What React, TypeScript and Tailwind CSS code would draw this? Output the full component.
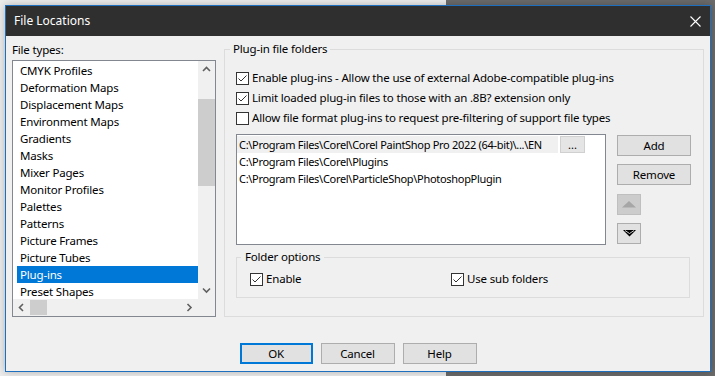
import React from "react";

const fileTypes = [
  "CMYK Profiles",
  "Deformation Maps",
  "Displacement Maps",
  "Environment Maps",
  "Gradients",
  "Masks",
  "Mixer Pages",
  "Monitor Profiles",
  "Palettes",
  "Patterns",
  "Picture Frames",
  "Picture Tubes",
  "Plug-ins",
  "Preset Shapes",
];

const folders = [
  "C:\\Program Files\\Corel\\Corel PaintShop Pro 2022 (64-bit)\\...\\EN",
  "C:\\Program Files\\Corel\\Plugins",
  "C:\\Program Files\\Corel\\ParticleShop\\PhotoshopPlugin",
];

function Check({ checked, label }: { checked: boolean; label: string }) {
  return (
    <div className="flex items-center h-[20px]">
      <span className="w-[13px] h-[13px] flex-none border border-[#333333] bg-white flex items-center justify-center">
        {checked && (
          <svg width="11" height="11" viewBox="0 0 11 11">
            <polyline points="1.5,5.5 4,8 9.5,2.5" fill="none" stroke="#333333" strokeWidth="1" />
          </svg>
        )}
      </span>
      <span className="ml-[3px] text-[#000]">{label}</span>
    </div>
  );
}

function Chevron({ dir }: { dir: "up" | "down" | "left" | "right" }) {
  const pts = {
    up: "1,5 4.5,1.5 8,5",
    down: "1,1.5 4.5,5 8,1.5",
    left: "5,1 1.5,4.5 5,8",
    right: "1.5,1 5,4.5 1.5,8",
  }[dir];
  const vert = dir === "up" || dir === "down";
  return (
    <svg width={vert ? 9 : 7} height={vert ? 7 : 9} viewBox={vert ? "0 0 9 7" : "0 0 7 9"}>
      <polyline points={pts} fill="none" stroke="#606060" strokeWidth="1.6" />
    </svg>
  );
}

function Btn({ children, primary }: { children: React.ReactNode; primary?: boolean }) {
  return (
    <button
      className={
        primary
          ? "w-[73px] h-[21px] bg-[#e1e1e1] border-2 border-[#0078d7] text-black leading-none"
          : "w-[74px] h-[21px] bg-[#e1e1e1] border border-[#adadad] text-black leading-none"
      }
    >
      {children}
    </button>
  );
}

export default function App() {
  return (
    <div
      className="relative w-[715px] h-[376px] overflow-hidden bg-[linear-gradient(to_right,#ececec_446px,#6b6b6b_446px)] text-[11.5px] tracking-[-0.18px] text-black"
      style={{ fontFamily: '"Noto Sans", "Open Sans", sans-serif' }}
    >
      {/* Dialog window */}
      <div className="absolute left-[5px] top-[5px] w-[706px] h-[367px] border border-[#1f6fbf] bg-[#f0f0f0] shadow-[0_0_8px_rgba(0,0,0,0.25)] flex flex-col">
        {/* Title bar */}
        <div className="h-[30px] flex-none bg-[#2f2f2f] flex items-center justify-between pl-[8px] pr-[9px]">
          <span className="text-white text-[12px] tracking-normal">File Locations</span>
          <svg width="11" height="11" viewBox="0 0 11 11">
            <path d="M0.5 0.5 L10.5 10.5 M10.5 0.5 L0.5 10.5" stroke="#ffffff" strokeWidth="1.1" />
          </svg>
        </div>

        {/* Body */}
        <div className="flex items-start pl-[6px]">
          {/* File types */}
          <div className="w-[204px] pt-[6px] flex-none">
            <div className="h-[16px] leading-[16px]">File types:</div>
            <div className="mt-[2px] h-[257px] border border-[#828790] bg-white grid grid-cols-[1fr_17px] grid-rows-[1fr_17px]">
              <div className="pl-[4px] pt-[1px] overflow-hidden">
                {fileTypes.map((t) => (
                  <div
                    key={t}
                    className={
                      t === "Plug-ins"
                        ? "h-[17px] leading-[17px] pl-[3px] bg-[#0078d7] text-white"
                        : "h-[17px] leading-[17px] pl-[3px]"
                    }
                  >
                    {t}
                  </div>
                ))}
              </div>
              <div className="bg-[#f0f0f0] flex flex-col items-center">
                <div className="h-[17px] flex items-center justify-center">
                  <Chevron dir="up" />
                </div>
                <div className="flex-1 w-full pt-[21px]">
                  <div className="h-[87px] w-full bg-[#cdcdcd]" />
                </div>
                <div className="h-[17px] flex items-center justify-center">
                  <Chevron dir="down" />
                </div>
              </div>
              <div className="bg-[#f0f0f0] flex items-center">
                <div className="w-[17px] h-full flex items-center justify-center">
                  <Chevron dir="left" />
                </div>
                <div className="w-[17px] h-[15px] bg-[#cdcdcd]" />
                <div className="flex-1" />
                <div className="w-[17px] h-full flex items-center justify-center">
                  <Chevron dir="right" />
                </div>
              </div>
              <div className="bg-[#f0f0f0]" />
            </div>
          </div>

          {/* Plug-in file folders */}
          <fieldset className="ml-[8px] mt-[5px] w-[480px] h-[276px] border border-[#dcdcdc]">
            <legend className="ml-[5px] px-[3px] h-[16px] leading-[16px]">Plug-in file folders</legend>
            <div className="pl-[11px]">
              <div className="mt-[11px]">
                <Check checked label="Enable plug-ins - Allow the use of external Adobe-compatible plug-ins" />
                <Check checked label="Limit loaded plug-in files to those with an .8B? extension only" />
                <Check checked={false} label="Allow file format plug-ins to request pre-filtering of support file types" />
              </div>

              <div className="mt-[6px] flex items-start">
                <div className="w-[370px] h-[111px] border border-[#828790] bg-white pt-[1px] text-[11px] tracking-[-0.3px]">
                  {folders.map((f, i) => (
                    <div key={f} className="h-[17px] flex items-center">
                      <div
                        className={
                          i === 0
                            ? "w-[321px] h-full leading-[17px] pl-[2px] bg-[#f0f0f0] whitespace-nowrap overflow-hidden"
                            : "h-full leading-[17px] pl-[2px] whitespace-nowrap"
                        }
                      >
                        {f}
                      </div>
                      {i === 0 && (
                        <div className="ml-[2px] w-[25px] h-full bg-[#e5e5e5] border border-[#d0d0d0] flex items-center justify-center leading-none tracking-normal">
                          ...
                        </div>
                      )}
                    </div>
                  ))}
                </div>
                <div className="ml-[11px] mt-[1px] flex flex-col">
                  <Btn>Add</Btn>
                  <div className="mt-[8px]">
                    <Btn>Remove</Btn>
                  </div>
                  <div className="mt-[9px] w-[24px] h-[21px] bg-[#cccccc] border border-[#bfbfbf] flex items-center justify-center">
                    <svg width="14" height="7" viewBox="0 0 14 7">
                      <polygon points="0,6.5 7,0 14,6.5" fill="#a6a6a6" />
                    </svg>
                  </div>
                  <div className="mt-[8px] w-[24px] h-[21px] bg-[#e1e1e1] border border-[#adadad] flex items-center justify-center">
                    <svg width="13" height="7" viewBox="0 0 13 7">
                      <polygon points="0,0 13,0 6.5,6.5" fill="#000000" />
                      <polyline points="2,0.5 6.5,3.5 11,0.5" fill="none" stroke="#ffffff" strokeWidth="0.8" />
                    </svg>
                  </div>
                </div>
              </div>

              <fieldset className="mt-[4px] w-[454px] border border-[#dcdcdc] pb-[8px]">
                <legend className="ml-[4px] px-[4px] h-[16px] leading-[16px]">Folder options</legend>
                <div className="mt-[4px] pl-[13px] flex">
                  <div className="w-[201px]">
                    <Check checked label="Enable" />
                  </div>
                  <Check checked label="Use sub folders" />
                </div>
              </fieldset>
            </div>
          </fieldset>
        </div>

        {/* Dialog buttons */}
        <div className="mt-[26px] flex justify-center gap-[8px]">
          <Btn primary>OK</Btn>
          <Btn>Cancel</Btn>
          <Btn>Help</Btn>
        </div>
      </div>
    </div>
  );
}
